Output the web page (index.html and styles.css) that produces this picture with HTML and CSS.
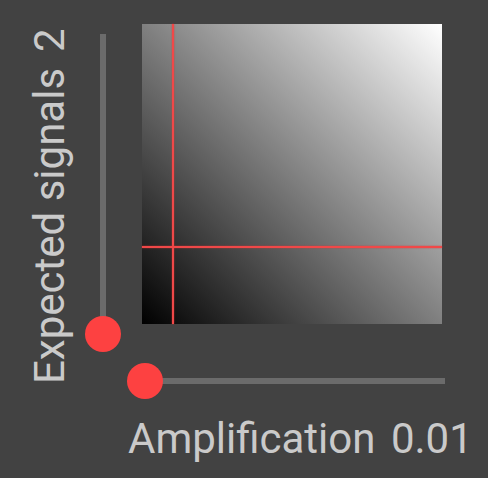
FILE: index.html
```html
<!DOCTYPE html>
<html>
<head>
<meta charset="utf-8">
<link rel="stylesheet" href="styles.css">
</head>
<body>
<div class="app">
  <div class="ylabel"><span>Expected signals</span> <span class="value">2</span></div>
  <div class="yslider"><div class="ytrack"><div class="thumb ythumb"></div></div></div>
  <div class="plot">
    <div class="vline"></div>
    <div class="hline"></div>
  </div>
  <div class="xslider"><div class="xtrack"><div class="thumb xthumb"></div></div></div>
  <div class="xlabel"><span>Amplification</span> <span class="value">0.01</span></div>
</div>
</body>
</html>
```
FILE: styles.css
```css
html, body {
  margin: 0;
  padding: 0;
  background: #424242;
  width: 488px;
  height: 478px;
  overflow: hidden;
}
.app {
  display: grid;
  grid-template-columns: 60px 57px 300px;
  grid-template-rows: 300px 60px auto;
  grid-template-areas:
    "ylabel yslider plot"
    "ylabel . xslider"
    ". xlabel xlabel";
  padding: 24px 0 0 25px;
  font-family: Roboto, "Noto Sans", sans-serif;
  font-size: 42px;
  color: #cacaca;
}
.value {
  margin-inline-start: 5px;
}
.ylabel {
  grid-area: ylabel;
  width: 49px;
  writing-mode: vertical-rl;
  transform: rotate(180deg);
  white-space: nowrap;
  line-height: normal;
}
.yslider {
  grid-area: yslider;
}
.ytrack {
  position: relative;
  margin: 10px 0 0 14.5px;
  width: 6px;
  height: 300px;
  background: #6b6b6b;
}
.thumb {
  position: absolute;
  width: 36px;
  height: 36px;
  border-radius: 50%;
  background: #fd4141;
}
.ythumb {
  left: 50%;
  bottom: 0;
  transform: translate(-50%, 50%);
}
.plot {
  grid-area: plot;
  position: relative;
  background: linear-gradient(to top right, #000, #fff);
}
.vline {
  position: absolute;
  left: 30px;
  top: 0;
  bottom: 0;
  width: 2px;
  background: #f04848;
  box-shadow: 0 0 1.5px #e03030;
}
.hline {
  position: absolute;
  top: 222px;
  left: 0;
  right: 0;
  height: 2px;
  background: #f04848;
  box-shadow: 0 0 1.5px #e03030;
}
.xslider {
  grid-area: xslider;
  display: flex;
  align-items: flex-end;
}
.xtrack {
  position: relative;
  flex: none;
  margin-left: 3px;
  width: 300px;
  height: 6px;
  background: #6b6b6b;
}
.xthumb {
  left: 0;
  top: 50%;
  transform: translate(-50%, -50%);
}
.xlabel {
  grid-area: xlabel;
  margin-top: 30px;
  padding-left: 43px;
  white-space: nowrap;
  line-height: normal;
}
```
